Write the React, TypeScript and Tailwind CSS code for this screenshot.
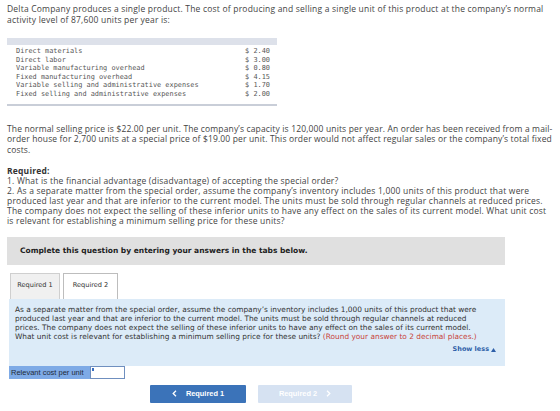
import React from "react";

const costs: [string, string][] = [
  ["Direct materials", "$ 2.40"],
  ["Direct labor", "$ 3.00"],
  ["Variable manufacturing overhead", "$ 0.80"],
  ["Fixed manufacturing overhead", "$ 4.15"],
  ["Variable selling and administrative expenses", "$ 1.70"],
  ["Fixed selling and administrative expenses", "$ 2.00"],
];

const body = { fontFamily: '"Open Sans", "Liberation Sans", Arial, sans-serif' };
const arial = { fontFamily: '"Liberation Sans", Arial, sans-serif' };
const verdana = { fontFamily: '"DejaVu Sans", Verdana, sans-serif' };
const mono = { fontFamily: '"DejaVu Sans Mono", Consolas, monospace' };

export default function App() {
  return (
    <div className="w-[560px] h-[411px] bg-white overflow-hidden pl-[7px] pt-[3px] text-[#444]" style={body}>
      <p className="text-[8.5px] leading-[11px] tracking-[0.2px] w-[548px]">
        Delta Company produces a single product. The cost of producing and selling a single unit of this product at the company’s normal
        activity level of 87,600 units per year is:
      </p>

      {/* cost table */}
      <div className="mt-[13px] w-[270px]" style={mono}>
        <div className="h-[7px] bg-[#dde1ea]" />
        <div className="pt-[2px] pb-[6px]">
          {costs.map(([label, value]) => (
            <div key={label} className="flex justify-between h-[8.5px] items-center pl-[9px] pr-[7px] text-[6.9px] text-[#555]">
              <span>{label}</span>
              <span>{value}</span>
            </div>
          ))}
        </div>
        <div className="h-[2px] bg-[#c9ced8]" />
      </div>

      <p className="mt-[18px] text-[8.5px] leading-[10.4px] tracking-[0.15px] w-[552px]">
        The normal selling price is $22.00 per unit. The company’s capacity is 120,000 units per year. An order has been received from a mail-<wbr />order house for 2,700 units at a special price of $19.00 per unit. This order would not affect regular sales or the company’s total fixed costs.
      </p>

      <div className="mt-[11px] text-[8.5px] leading-[9.9px] tracking-[0.2px] w-[548px]">
        <p className="font-bold text-[#333]">Required:</p>
        <p>1. What is the financial advantage (disadvantage) of accepting the special order?</p>
        <p>
          2. As a separate matter from the special order, assume the company’s inventory includes 1,000 units of this product that were produced last year and that are inferior to the current model. The units must be sold through regular channels at reduced prices. The company does not expect the selling of these inferior units to have any effect on the sales of its current model. What unit cost is relevant for establishing a minimum selling price for these units?
        </p>
      </div>

      {/* instructions bar */}
      <div className="mt-[11px] w-[498px] h-[28px] bg-[#e0e0e0] flex items-center pl-[13px] text-[7.5px] font-bold text-[#222]" style={verdana}>
        Complete this question by entering your answers in the tabs below.
      </div>

      {/* tabs */}
      <div className="mt-[8px] ml-[3px] flex gap-[3px] items-end h-[26px]" style={verdana}>
        <div className="w-[50px] h-[26px] bg-[#f0f0f0] border border-[#cfcfcf] border-b-0 flex items-center justify-center text-[6.6px] text-[#333]">
          Required 1
        </div>
        <div className="w-[55px] h-[26px] bg-white border border-[#bdbdbd] border-b-0 flex items-center justify-center text-[6.6px] text-[#333]">
          Required 2
        </div>
      </div>

      {/* question panel */}
      <div className="ml-[2px] w-[496px] h-[67px] bg-[#dcebf8] pt-[6px] pl-[6px] pr-[8px]" style={verdana}>
        <p className="text-[7.4px] leading-[9px] text-[#333] w-[466px]">
          As a separate matter from the special order, assume the company’s inventory includes 1,000 units of this product that were produced last year and that are inferior to the current model. The units must be sold through regular channels at reduced prices. The company does not expect the selling of these inferior units to have any effect on the sales of its current model. What unit cost is relevant for establishing a minimum selling price for these units?{" "}
          <span className="text-[#c8443a]">(Round your answer to 2 decimal places.)</span>
        </p>
        <div className="flex justify-end mt-[4px] pr-[1px]">
          <span className="text-[6.5px] font-bold text-[#2e5fa8] flex items-center gap-[2px]">
            Show less
            <svg width="5" height="4" viewBox="0 0 5 4">
              <path d="M0 4 L2.5 0 L5 4 Z" fill="#2e5fa8" />
            </svg>
          </span>
        </div>
      </div>

      {/* answer row */}
      <div className="ml-[2px] flex h-[13px]" style={arial}>
        <div className="w-[81px] bg-[#7eaae6] flex items-center pl-[2px] text-[7.5px] text-[#1e2a3a]">
          Relevant cost per unit
        </div>
        <div className="relative w-[35px] bg-white border border-[#6f8fbf]">
          <div className="absolute left-[1px] top-[1px] w-[1.5px] h-[3px] bg-[#3a6fc0]" />
        </div>
      </div>

      {/* navigation */}
      <div className="mt-[6px] ml-[143px] flex gap-[12px]" style={arial}>
        <div className="w-[96px] h-[18px] bg-[#3b73b9] rounded-[1px] flex items-center justify-center gap-[9px] text-white text-[7.4px] font-bold">
          <svg width="5" height="7" viewBox="0 0 5 7">
            <path d="M4 0.8 L1.2 3.5 L4 6.2" stroke="white" strokeWidth="1.3" fill="none" />
          </svg>
          <span>Required 1</span>
        </div>
        <div className="w-[94px] h-[18px] bg-[#d6e2f2] rounded-[1px] flex items-center justify-center gap-[9px] text-white text-[7.4px] font-bold">
          <span>Required 2</span>
          <svg width="5" height="7" viewBox="0 0 5 7">
            <path d="M1 0.8 L3.8 3.5 L1 6.2" stroke="white" strokeWidth="1.3" fill="none" />
          </svg>
        </div>
      </div>
    </div>
  );
}
